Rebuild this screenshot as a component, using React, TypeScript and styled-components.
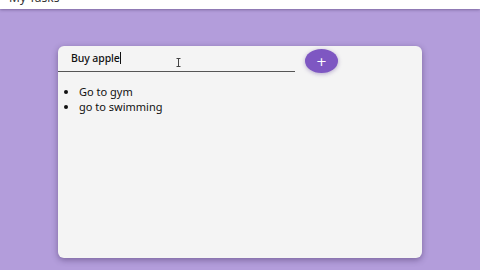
import React from 'react';
import styled, { createGlobalStyle } from 'styled-components';

const GlobalStyle = createGlobalStyle`
  html, body {
    margin: 0;
    padding: 0;
    background: #b39ddb;
    font-family: 'Noto Sans', 'DejaVu Sans', sans-serif;
  }
`;

const Page = styled.div`
  width: 480px;
  height: 270px;
  display: flex;
  flex-direction: column;
  overflow: hidden;
`;

const Header = styled.header`
  height: 9px;
  background: #ffffff;
  overflow: hidden;
  box-shadow: 0 1px 3px rgba(60, 40, 90, 0.45);
  position: relative;
  z-index: 1;
`;

const HeaderTitle = styled.div`
  margin: -9px 0 0 9px;
  font-size: 12px;
  line-height: 14px;
  color: #333;
`;

const Main = styled.main`
  flex: 1;
  padding: 37px 58px 0 58px;
`;

const Card = styled.section`
  height: 212px;
  background: #f4f4f4;
  border-radius: 6px;
  box-shadow: 0 2px 6px rgba(50, 30, 80, 0.45);
  display: flex;
  flex-direction: column;
`;

const InputRow = styled.div`
  display: flex;
  align-items: flex-start;
  padding-top: 3px;
  gap: 10px;
`;

const Field = styled.div`
  position: relative;
  width: 237px;
  height: 23px;
  border-bottom: 1px solid #555;
  padding: 3px 0 0 13px;
  box-sizing: border-box;
  font-size: 10.5px;
  line-height: 13px;
  font-weight: 500;
  color: #111;
  letter-spacing: -0.1px;
`;

const Caret = styled.span`
  display: inline-block;
  width: 1px;
  height: 12px;
  background: #111;
  vertical-align: -2px;
`;

const Beam = styled.svg`
  position: absolute;
  left: 118px;
  top: 9px;
`;

const AddButton = styled.button`
  width: 33px;
  height: 24px;
  border: none;
  border-radius: 50%;
  background: #7e57c2;
  color: #fff;
  font-size: 13px;
  line-height: 1;
  padding: 0;
  box-shadow: 0 1px 4px rgba(80, 50, 140, 0.4);
  display: flex;
  align-items: center;
  justify-content: center;
  font-family: 'DejaVu Sans', sans-serif;
`;

const TaskList = styled.ul`
  margin: 11px 0 0 0;
  padding: 0 0 0 21px;
  font-size: 11px;
  line-height: 15px;
  color: #111;
`;

const Task = styled.li``;

export default function App() {
  return (
    <Page>
      <GlobalStyle />
      <Header>
        <HeaderTitle>My Tasks</HeaderTitle>
      </Header>
      <Main>
        <Card>
          <InputRow>
            <Field>
              Buy apple
              <Caret />
              <Beam width="5" height="9" viewBox="0 0 5 9">
                <path d="M0.5 0.5h4M2.5 0.5v8M0.5 8.5h4" stroke="#444" strokeWidth="1" fill="none" />
              </Beam>
            </Field>
            <AddButton>+</AddButton>
          </InputRow>
          <TaskList>
            <Task>Go to gym</Task>
            <Task>go to swimming</Task>
          </TaskList>
        </Card>
      </Main>
    </Page>
  );
}
